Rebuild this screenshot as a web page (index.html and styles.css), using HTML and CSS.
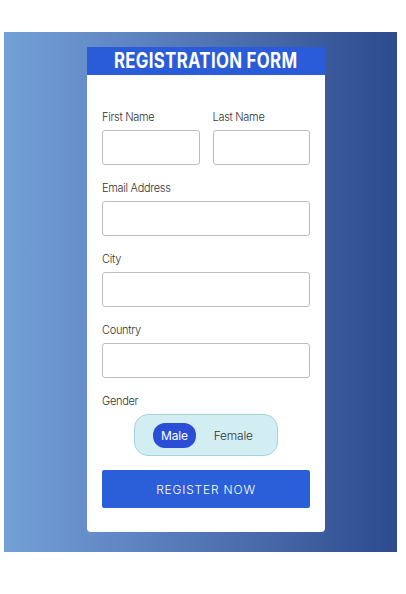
FILE: index.html
```html
<!DOCTYPE html>
<html>
<head>
<meta charset="utf-8">
<link rel="stylesheet" href="styles.css">
</head>
<body>
<div class="panel">
  <div class="card">
    <div class="card-head"><span class="title">REGISTRATION FORM</span></div>
    <form class="card-body">
      <div class="row">
        <div class="field">
          <label class="label">First Name</label>
          <input class="input" type="text">
        </div>
        <div class="field">
          <label class="label">Last Name</label>
          <input class="input" type="text">
        </div>
      </div>
      <div class="field">
        <label class="label">Email Address</label>
        <input class="input" type="text">
      </div>
      <div class="field">
        <label class="label">City</label>
        <input class="input" type="text">
      </div>
      <div class="field">
        <label class="label">Country</label>
        <input class="input" type="text">
      </div>
      <div class="field gender">
        <label class="label">Gender</label>
        <div class="toggle">
          <span class="opt active">Male</span>
          <span class="opt">Female</span>
        </div>
      </div>
      <button class="btn" type="button">REGISTER NOW</button>
    </form>
  </div>
</div>
</body>
</html>
```

FILE: styles.css
```css
html, body {
  margin: 0;
  padding: 0;
  background: #ffffff;
}
body {
  font-family: "Inter", "Open Sans", sans-serif;
  color: #333;
}
.panel {
  margin: 32px 0 0 4px;
  width: 393px;
  height: 520px;
  background: linear-gradient(90deg, #73a0d7 0%, #5d82c0 35%, #4565a6 70%, #2c4a8e 100%);
  padding-top: 15px;
  box-sizing: border-box;
}
.card {
  margin-left: 83px;
  width: 238px;
  background: #fff;
  border-radius: 0 0 4px 4px;
}
.card-head {
  height: 28px;
  background: #2a5bd8;
  color: #fff;
  display: flex;
  justify-content: center;
  align-items: center;
  overflow: hidden;
}
.title {
  display: inline-block;
  font-family: "Inter", sans-serif;
  font-weight: 700;
  font-size: 21px;
  line-height: 28px;
  letter-spacing: 0.4px;
  white-space: nowrap;
  transform: scaleX(0.8);
}
.card-body {
  padding: 34px 15px 24px;
  display: flex;
  flex-direction: column;
}
.row {
  display: flex;
  gap: 13px;
}
.row .field {
  flex: 1;
}
.field {
  display: flex;
  flex-direction: column;
  margin-bottom: 15px;
}
.label {
  font-size: 11px;
  line-height: 16px;
  font-weight: 300;
  color: #333;
  margin-bottom: 5px;
  letter-spacing: -0.3px;
}
.input {
  height: 35px;
  box-sizing: border-box;
  border: 1px solid #bdbdbd;
  border-radius: 3px;
  margin: 0;
  width: 100%;
  background: #fff;
}
.gender {
  margin-bottom: 14px;
}
.gender .label {
  margin-bottom: 5px;
}
.toggle {
  align-self: center;
  width: 144px;
  height: 42px;
  box-sizing: border-box;
  background: #d3eef3;
  border: 1px solid #a3d3df;
  border-radius: 14px;
  display: flex;
  align-items: center;
  padding: 0 18px;
}
.opt {
  font-size: 12px;
  font-weight: 300;
  color: #333;
  height: 25px;
  line-height: 25px;
  letter-spacing: -0.2px;
}
.opt.active {
  background: #2a4fd6;
  color: #fff;
  border-radius: 12px;
  padding: 0 8px;
  margin-right: 18px;
  font-weight: 400;
}
.btn {
  height: 38px;
  border: none;
  border-radius: 2px;
  background: #2b5fd9;
  color: #fff;
  font-family: "Inter", sans-serif;
  font-weight: 300;
  font-size: 12px;
  letter-spacing: 0.8px;
  margin: 0;
  padding: 0;
}
```
